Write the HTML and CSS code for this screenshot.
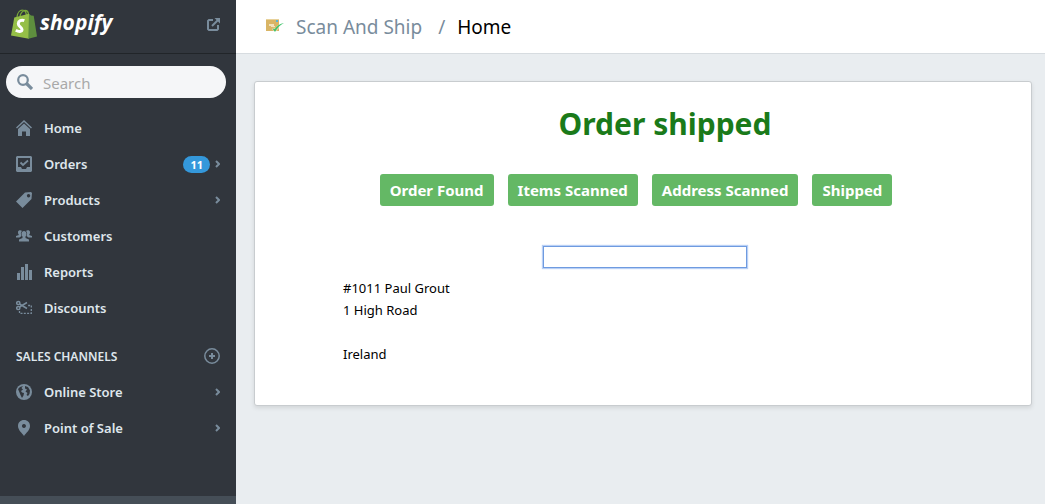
FILE: index.html
```html
<!DOCTYPE html>
<html lang="en">
<head>
    <meta charset="UTF-8">
    <meta name="viewport" content="width=device-width, initial-scale=1.0">
    <title>Scan And Ship - Home</title>
    <link rel="stylesheet" href="styles.css">
</head>
<body>
    <div class="layout">
        <aside class="sidebar">
            <div class="sidebar-top">
                <a class="logo" href="#">
                    <svg width="27" height="30" viewBox="0 0 27 30">
                        <path d="M6 8C6.500 3.500 9 1 11.500 1.200C14 1.200 15.300 4 15.500 7M9 7.500C9.500 4 12 1.500 14 1.500C16.500 1.500 17.500 4 17.500 6" fill="none" stroke="#79a83a" stroke-width="1.300"/>
                        <path d="M3.300 8.400L18 4.800V29.800L0 26.500z" fill="#95bf47"/>
                        <path d="M18 4.800L20 6.400L22.700 6.800L26 27.500L17.300 29.800z" fill="#5e8e3e"/>
                        <path d="M13.300 11.700C10.500 10.500 7.300 11.800 7.300 14.700C7.300 17.800 11 17.800 11 20.500C11 23 7.500 22.800 4.800 21.200" fill="none" stroke="#fff" stroke-width="3"/>
                    </svg>
                    <span class="logo-text">shopify</span>
                </a>
                <a class="external" href="#" aria-label="View store">
                    <svg width="13" height="13" viewBox="0 0 13 13" fill="none" stroke="#798c9c" stroke-width="2">
                        <path d="M6 2H2L1 3V11L2 12H10L11 11V7"/>
                        <path d="M5 8L11 2"/>
                        <path d="M7.500 0H13V5.500z" fill="#798c9c" stroke="none"/>
                    </svg>
                </a>
            </div>
            <form class="search">
                <svg width="16" height="16" viewBox="0 0 16 16" fill="none" stroke="#798c9c">
                    <circle cx="6" cy="6" r="4.800" stroke-width="2.200"/>
                    <path d="M9.500 9.500L15 15" stroke-width="3.200"/>
                </svg>
                <input type="search" placeholder="Search" aria-label="Search">
            </form>
            <nav>
                <ul class="menu">
                    <li><a href="#">
                        <svg class="icon" viewBox="0 0 16 16"><path d="M0.500 8L8 1L15.500 8" fill="none" stroke="#798c9c" stroke-width="1.500"/><path d="M2 9L8 3.500L14 9V16H10V11.500H6V16H2z"/></svg>
                        <span>Home</span></a></li>
                    <li><a href="#">
                        <svg class="icon" viewBox="0 0 16 16"><path fill-rule="evenodd" d="M1 0H15L16 1V15L15 16H1L0 15V1zM2 2V11H5L6 13H10L11 11H14V2z"/><path d="M4.500 6.500L7 9L12 4.500" fill="none" stroke="#798c9c" stroke-width="1.800"/></svg>
                        <span>Orders</span>
                        <span class="count">11</span>
                        <svg class="arrow" viewBox="0 0 5 8"><path d="M1 1L4 4L1 7"/></svg></a></li>
                    <li><a href="#">
                        <svg class="icon" viewBox="0 0 16 16"><path fill-rule="evenodd" d="M9 0.500L15 0L16 1L15.500 7L6.500 16L0 9.500zM12.500 2A1.700 1.700 0 1 0 12.600 2z"/></svg>
                        <span>Products</span>
                        <svg class="arrow" viewBox="0 0 5 8"><path d="M1 1L4 4L1 7"/></svg></a></li>
                    <li><a href="#">
                        <svg class="icon" viewBox="0 0 16 16"><path d="M2 4C2 2 5 1.500 6 3C4.500 4 4.700 6.500 5.500 8L3.500 9.500H0V8L3 7C2 6 2 5 2 4zM14 4C14 2 11 1.500 10 3C11.500 4 11.300 6.500 10.500 8L12.500 9.500H16V8L13 7C14 6 14 5 14 4z"/><path d="M5.500 5.500C5.500 2 10.500 2 10.500 5.500C10.500 7 10 8 9.500 8.500V10L13 11.500V13.500H3V11.500L6.500 10V8.500C6 8 5.500 7 5.500 5.500z"/></svg>
                        <span>Customers</span></a></li>
                    <li><a href="#">
                        <svg class="icon" viewBox="0 0 16 16"><path d="M1 9H4V16H1zM5 3H8V16H5zM9 0H12V16H9zM13 6H16V16H13z"/></svg>
                        <span>Reports</span></a></li>
                    <li><a href="#">
                        <svg class="icon" viewBox="0 0 16 16"><g fill="none" stroke="#798c9c" stroke-width="1.500"><circle cx="2.300" cy="3" r="1.600"/><circle cx="2.300" cy="8" r="1.600"/><path d="M3.500 4L11 8.500M3.500 7L11 2.500"/><path d="M3.500 11V13.300H15.300V5.500H11.500" stroke-width="1.300" stroke-dasharray="2 1.300"/></g></svg>
                        <span>Discounts</span></a></li>
                </ul>
                <div class="menu-heading">
                    <h2>SALES CHANNELS</h2>
                    <button type="button" aria-label="Add sales channel">
                        <svg width="16" height="16" viewBox="0 0 16 16" fill="none" stroke="#798c9c"><circle cx="8" cy="8" r="7.200" stroke-width="1.500"/><path d="M8 5V11M5 8H11" stroke-width="2"/></svg>
                    </button>
                </div>
                <ul class="menu">
                    <li><a href="#">
                        <svg class="icon" viewBox="0 0 16 16"><circle cx="8" cy="8" r="8"/><path d="M2 5L4 3L7 2L5.500 4L7 5.500L5 7L6 8.500L8 9L7.500 11.500L6 14L4.500 11L3.500 8.500zM9 2L12 3L14 6.500L13.500 10L12 12L10.500 11L11.500 9L9.500 7.500L11 5.500L9 4.500z" fill="#31363d"/></svg>
                        <span>Online Store</span>
                        <svg class="arrow" viewBox="0 0 5 8"><path d="M1 1L4 4L1 7"/></svg></a></li>
                    <li><a href="#">
                        <svg class="icon" viewBox="0 0 16 16"><path fill-rule="evenodd" d="M8 0C4.500 0 2 2.500 2 6C2 10 6 13 8 16C10 13 14 10 14 6C14 2.500 11.500 0 8 0zM8 4A2 2 0 1 1 7.900 4z"/></svg>
                        <span>Point of Sale</span>
                        <svg class="arrow" viewBox="0 0 5 8"><path d="M1 1L4 4L1 7"/></svg></a></li>
                </ul>
            </nav>
            <div class="sidebar-footer"></div>
        </aside>

        <div class="page">
            <header class="header">
                <svg width="18" height="18" viewBox="0 0 18 18">
                    <path d="M0 1H13V13H0z" fill="#d9b565"/>
                    <path d="M0 1H13V2H0z" fill="#e8d29b"/>
                    <path d="M3 6H8V8H3zM5 8H9V9H5z" fill="#f1e2bd"/>
                    <path d="M10 2H12V4H10z" fill="#58b5d8"/>
                    <path d="M7 10L9 13L12 9L18 5" fill="none" stroke="#fff" stroke-width="3" opacity="0.400"/>
                    <path d="M6.500 10.500L9 14C11 10 14 7 18 5C14 5.500 11 8 8.800 11z" fill="#3fc46b"/>
                </svg>
                <a href="#">Scan And Ship</a>
                <span class="slash">/</span>
                <h1>Home</h1>
            </header>
            <main class="content">
                <section class="card">
                    <h2 class="status">Order shipped</h2>
                    <div class="steps">
                        <span class="step">Order Found</span>
                        <span class="step">Items Scanned</span>
                        <span class="step">Address Scanned</span>
                        <span class="step">Shipped</span>
                    </div>
                    <form class="scan">
                        <input type="text" aria-label="Scan barcode">
                    </form>
                    <address>
                        #1011 Paul Grout<br>
                        1 High Road<br>
                        <br>
                        Ireland
                    </address>
                </section>
            </main>
        </div>
    </div>
</body>
</html>
```
FILE: styles.css
```css
* {
    box-sizing: border-box;
}

body {
    margin: 0;
    font-family: "Segoe UI", "Noto Sans", sans-serif;
    font-size: 14px;
    color: #000;
    background-color: #e9edf0;
}

a {
    color: inherit;
    text-decoration: none;
}

h1, h2 {
    margin: 0;
}

.layout {
    display: flex;
    min-height: 100vh;
}

/* Sidebar */
.sidebar {
    display: flex;
    flex-direction: column;
    flex: 0 0 236px;
    min-width: 0;
    background-color: #31363d;
    color: #dfe6ec;
}

.sidebar-top {
    display: flex;
    align-items: center;
    justify-content: space-between;
    height: 54px;
    padding: 0 16px 4px 11px;
    border-bottom: 1px solid #212529;
}

.logo {
    display: flex;
    align-items: center;
    gap: 2px;
    padding-bottom: 2px;
}

.logo-text {
    padding-bottom: 4px;
    font-family: "Open Sans", sans-serif;
    font-size: 21px;
    font-weight: 700;
    font-style: italic;
    line-height: 30px;
    color: #fff;
}

.external {
    display: flex;
}

.search {
    display: flex;
    align-items: center;
    gap: 10px;
    height: 32px;
    margin: 12px 10px 12px 6px;
    padding: 0 11px;
    border-radius: 16px;
    background-color: #f5f6f8;
}

.search input {
    flex: 1;
    min-width: 0;
    padding: 2px 0 0;
    border: 0;
    outline: none;
    background: none;
    font-family: inherit;
    font-size: 15px;
}

.search input::placeholder {
    color: #a9a9a9;
}

.menu {
    margin: 0;
    padding: 0;
    list-style: none;
}

.menu a {
    display: flex;
    align-items: center;
    height: 36px;
    padding: 0 16px;
    font-size: 13px;
    font-weight: 600;
}

.icon {
    width: 16px;
    height: 16px;
    margin-right: 12px;
    fill: #798c9c;
}

.arrow {
    width: 5px;
    height: 8px;
    margin-left: auto;
    fill: none;
    stroke: #798c9c;
    stroke-width: 2;
}

.count {
    margin-left: auto;
    padding: 0 7px;
    border-radius: 9px;
    background-color: #3498db;
    color: #fff;
    font-size: 11px;
    font-weight: 700;
    line-height: 17px;
}

.count + .arrow {
    margin-left: 5px;
}

.menu-heading {
    display: flex;
    align-items: center;
    justify-content: space-between;
    height: 36px;
    margin-top: 12px;
    padding: 0 16px;
}

.menu-heading h2 {
    font-size: 12px;
    font-weight: 600;
}

.menu-heading button {
    display: flex;
    padding: 0;
    border: 0;
    background: none;
    cursor: pointer;
}

.sidebar-footer {
    height: 8px;
    margin-top: auto;
    background-color: #454e57;
}

/* Page */
.page {
    flex: 1;
    min-width: 0;
}

.header {
    display: flex;
    align-items: center;
    height: 54px;
    padding: 0 30px;
    border-bottom: 1px solid #d7dce0;
    background-color: #fff;
    font-size: 19px;
    color: #798c9c;
}

.header a {
    margin-left: 12px;
}

.header .slash {
    margin: 0 12px 0 16px;
}

.header h1 {
    font-size: 19px;
    font-weight: 400;
    color: #000;
}

.content {
    padding: 27px 13px 27px 18px;
}

.card {
    padding: 20px 88px 40px;
    border: 1px solid #c8cccf;
    border-radius: 3px;
    background-color: #fff;
    box-shadow: 0 2px 4px rgba(0, 0, 0, 0.1);
}

.status {
    padding-left: 44px;
    font-size: 30px;
    line-height: 44px;
    text-align: center;
    color: #1a7a1a;
}

.steps {
    display: flex;
    flex-wrap: wrap;
    justify-content: center;
    margin-top: 28px;
}

.step {
    margin-right: 14px;
    padding: 0 10px;
    border-radius: 3px;
    background-color: #64b865;
    color: #fff;
    font-size: 15px;
    font-weight: 700;
    line-height: 32px;
}

.scan {
    display: flex;
    justify-content: center;
    margin-top: 40px;
    padding-left: 4px;
}

.scan input {
    width: 204px;
    height: 22px;
    padding: 1px 4px;
    border: 1px solid #6f9be0;
    outline: none;
    box-shadow: 0 0 1px 1px #b9d0f5;
}

address {
    margin-top: 9px;
    font-style: normal;
    font-size: 13px;
    line-height: 22px;
}
```
